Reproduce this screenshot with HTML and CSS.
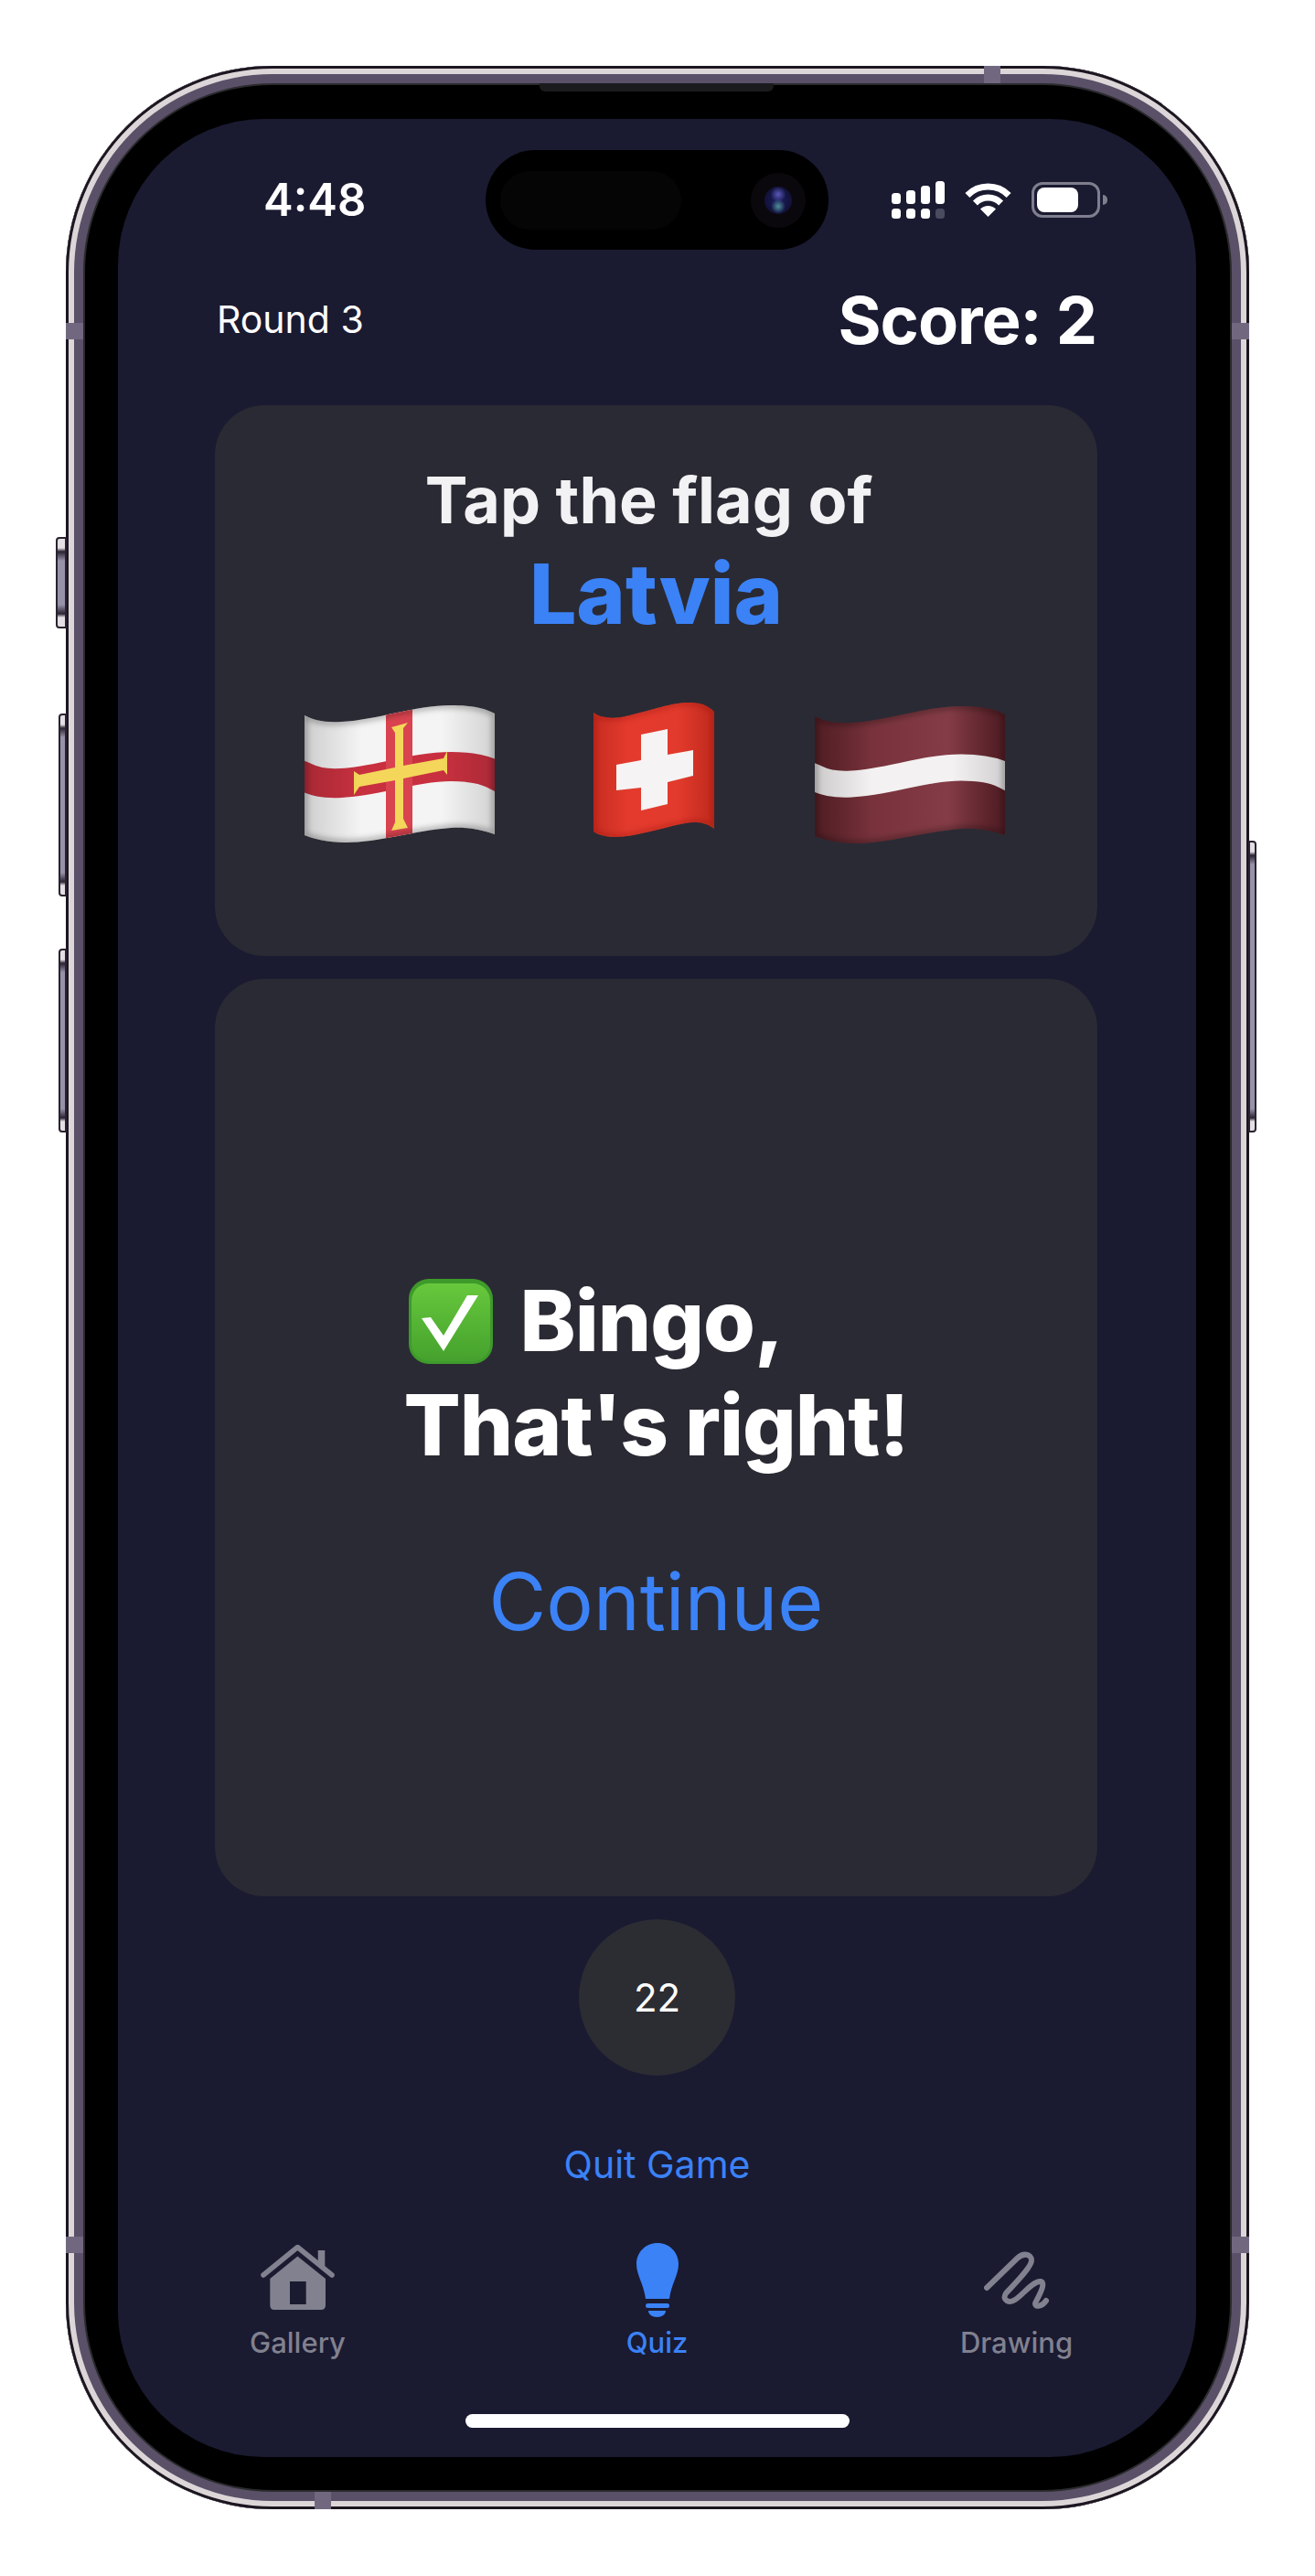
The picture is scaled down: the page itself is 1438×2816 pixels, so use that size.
FILE: index.html
```html
<!DOCTYPE html>
<html lang="en">
<head>
<meta charset="utf-8">
<title>Flag Quiz</title>
<link rel="stylesheet" href="styles.css">
</head>
<body>
<div class="phone">
  <span class="btn btn-mute"></span>
  <span class="btn btn-vol-up"></span>
  <span class="btn btn-vol-down"></span>
  <span class="btn btn-power"></span>
  <span class="band band-top"></span>
  <span class="band band-bottom"></span>
  <span class="band band-l1"></span>
  <span class="band band-l2"></span>
  <span class="band band-r1"></span>
  <span class="band band-r2"></span>
  <span class="speaker"></span>

  <main class="screen">
    <div class="status">
      <div class="time">4:48</div>
      <div class="island">
        <span class="island-sensor"></span>
        <span class="island-lens"><span class="lens-core"></span></span>
      </div>
      <div class="status-icons">
        <svg class="ic-signal" width="58" height="41" viewBox="0 0 58 41">
          <g fill="#fff">
            <rect x="0" y="13" width="10" height="12" rx="3.5"/>
            <rect x="16" y="10" width="10" height="15" rx="3.5"/>
            <rect x="32" y="5" width="10" height="20" rx="3.5"/>
            <rect x="48" y="0" width="10" height="25" rx="3.5"/>
            <rect x="0" y="30" width="10" height="11" rx="3.5"/>
            <rect x="16" y="30" width="10" height="11" rx="3.5"/>
            <rect x="32" y="30" width="10" height="11" rx="3.5"/>
          </g>
          <rect x="48" y="30" width="10" height="11" rx="3.5" fill="#4b4b60"/>
        </svg>
        <svg class="ic-wifi" width="51" height="37" viewBox="0 0 51 37">
          <path d="M2.9 13.4A32 32 0 0 1 48.1 13.4" fill="none" stroke="#fff" stroke-width="7"/>
          <path d="M11.4 21.9A20 20 0 0 1 39.6 21.9" fill="none" stroke="#fff" stroke-width="7"/>
          <path d="M17 28.5A12 12 0 0 1 34 28.5L25.5 37Z" fill="#fff"/>
        </svg>
        <div class="battery">
          <span class="battery-fill"></span>
          <span class="battery-nub"></span>
        </div>
      </div>
    </div>

    <header class="score-row">
      <span class="round">Round 3</span>
      <span class="score">Score: 2</span>
    </header>

    <section class="card card-question">
      <h1 class="prompt">Tap the flag of</h1>
      <h2 class="country">Latvia</h2>
      <div class="flags">
        <svg class="flag flag-gg" width="208" height="150" viewBox="0 0 208 150" role="img" aria-label="Flag of Guernsey">
          <defs>
            <clipPath id="clipGG"><path d="M0 11C10 16 20 19 40 18C80 16 120 0 160 0C180 0 195 2 208 9L208 141C190 135 175 133 160 134C120 137 80 150 45 150C25 150 10 146 0 142Z"/></clipPath>
            <linearGradient id="shadeLight" x1="0" x2="1" y1="0" y2="0">
              <stop offset="0" stop-color="#000" stop-opacity=".16"/>
              <stop offset=".3" stop-color="#000" stop-opacity="0"/>
              <stop offset=".72" stop-color="#000" stop-opacity="0"/>
              <stop offset="1" stop-color="#000" stop-opacity=".14"/>
            </linearGradient>
            <filter id="soft" x="-10%" y="-10%" width="120%" height="120%"><feGaussianBlur stdDeviation="3"/></filter>
          </defs>
          <g clip-path="url(#clipGG)">
            <rect width="208" height="150" fill="#f4f4f4"/>
            <path d="M-12 6L0 11C10 16 20 19 40 18C80 16 120 0 160 0C180 0 195 2 208 9L220 15" transform="translate(0 67)" fill="none" stroke="#c8303f" stroke-width="32"/>
            <rect x="89" width="29" height="150" fill="#d9434f"/>
            <path d="M95 24L113 19L108 25L108 66L152 58L156 50L156 76L152 71L108 80L108 124L113 134L95 137L99 128L99 82L60 89L54 98L54 72L60 76L99 68L99 30Z" fill="#f4d75a"/>
            <rect width="208" height="150" fill="url(#shadeLight)"/>
            <path d="M0 11C10 16 20 19 40 18C80 16 120 0 160 0C180 0 195 2 208 9L208 141C190 135 175 133 160 134C120 137 80 150 45 150C25 150 10 146 0 142Z" fill="none" stroke="#000" stroke-opacity=".3" stroke-width="6" filter="url(#soft)"/>
          </g>
        </svg>
        <svg class="flag flag-ch" width="132" height="148" viewBox="0 0 132 148" role="img" aria-label="Flag of Switzerland">
          <defs>
            <clipPath id="clipCH"><path d="M0 11C8 17 22 18 35 15C65 8 85 0 105 0C118 0 126 4 132 10L132 138C122 130 110 130 100 132C70 138 45 147 25 147C15 147 5 145 0 141Z"/></clipPath>
            <linearGradient id="shadeCH" x1="0" x2="1" y1="0" y2="0">
              <stop offset="0" stop-color="#c72c20"/>
              <stop offset=".28" stop-color="#e33a2d"/>
              <stop offset=".7" stop-color="#e23a2c"/>
              <stop offset="1" stop-color="#bf2a1c"/>
            </linearGradient>
          </defs>
          <g clip-path="url(#clipCH)">
            <rect width="132" height="148" fill="url(#shadeCH)"/>
            <path d="M52 35L81 29L81 57L109 52L109 80L81 87L81 111L52 118L52 93L25 96L25 68L52 63Z" fill="#f5f3f3"/>
            <path d="M0 11C8 17 22 18 35 15C65 8 85 0 105 0C118 0 126 4 132 10L132 138C122 130 110 130 100 132C70 138 45 147 25 147C15 147 5 145 0 141Z" fill="none" stroke="#7d140b" stroke-opacity=".35" stroke-width="5" filter="url(#soft)"/>
          </g>
        </svg>
        <svg class="flag flag-lv" width="208" height="150" viewBox="0 0 208 150" role="img" aria-label="Flag of Latvia">
          <defs>
            <clipPath id="clipLV"><path d="M0 11C10 16 20 19 40 18C80 16 120 0 160 0C180 0 195 2 208 9L208 141C190 135 175 133 160 134C120 137 80 150 45 150C25 150 10 146 0 142Z"/></clipPath>
            <linearGradient id="shadeLV" x1="0" x2="1" y1="0" y2="0">
              <stop offset="0" stop-color="#5e222a"/>
              <stop offset=".3" stop-color="#78323b"/>
              <stop offset=".7" stop-color="#843c46"/>
              <stop offset="1" stop-color="#5a1f27"/>
            </linearGradient>
          </defs>
          <g clip-path="url(#clipLV)">
            <rect width="208" height="150" fill="url(#shadeLV)"/>
            <path d="M-12 6L0 11C10 16 20 19 40 18C80 16 120 0 160 0C180 0 195 2 208 9L220 15" transform="translate(0 67)" fill="none" stroke="#f3f1f1" stroke-width="29"/>
            <rect width="208" height="150" fill="url(#shadeLight)"/>
            <path d="M0 11C10 16 20 19 40 18C80 16 120 0 160 0C180 0 195 2 208 9L208 141C190 135 175 133 160 134C120 137 80 150 45 150C25 150 10 146 0 142Z" fill="none" stroke="#000" stroke-opacity=".3" stroke-width="6" filter="url(#soft)"/>
          </g>
        </svg>
      </div>
    </section>

    <section class="card card-result">
      <div class="result-text">
        <div class="result-line">
          <svg class="check" width="92" height="93" viewBox="0 0 92 93" role="img" aria-label="Check mark">
            <defs>
              <linearGradient id="checkFill" x1="0" x2="0" y1="0" y2="1">
                <stop offset="0" stop-color="#67c83c"/>
                <stop offset="1" stop-color="#45a12d"/>
              </linearGradient>
            </defs>
            <rect width="92" height="93" rx="22" fill="#3e9a2b"/>
            <rect x="3" y="5" width="86" height="85" rx="19" fill="url(#checkFill)"/>
            <path d="M14 43L24 42L38 62L64 18L76 18L38 79Z" fill="#fff"/>
          </svg>
          <span>Bingo,</span>
        </div>
        <div class="result-line">That's right!</div>
      </div>
      <div class="continue">Continue</div>
    </section>

    <div class="timer">22</div>
    <div class="quit">Quit Game</div>

    <nav class="tabs">
      <div class="tab">
        <div class="tab-icon">
          <svg class="home-icon" width="81" height="72" viewBox="0 0 81 72">
            <path fill="#81818f" d="M62.7 7H70.3V25H62.7Z"/>
            <path fill="none" stroke="#81818f" stroke-width="5.5" stroke-linecap="round" stroke-linejoin="round" d="M3 34L40.4 3.5L78 34"/>
            <path fill="#81818f" fill-rule="evenodd" d="M40.4 13.5L71 38V67Q71 72 66 72H15Q10.300 72 10.300 67V38ZM32 41V66H49.700V41Z"/>
          </svg>
        </div>
        <span class="tab-label">Gallery</span>
      </div>
      <div class="tab tab-active">
        <div class="tab-icon">
          <svg width="46" height="81" viewBox="15 7 46 81">
            <path fill="#3b82f6" d="M38 7C51 7 61 17 61 30C61 42 53 52 51 68L25 68C23 52 15 42 15 30C15 17 25 7 38 7Z"/>
            <rect x="25" y="73" width="26" height="5" rx="2.500" fill="#3b82f6"/>
            <path fill="#3b82f6" d="M28 81L47 81C47 85 43 88 37.500 88C32 88 28 85 28 81Z"/>
          </svg>
        </div>
        <span class="tab-label">Quiz</span>
      </div>
      <div class="tab">
        <div class="tab-icon">
          <svg width="72" height="66" viewBox="14 14 72 66">
            <path fill="none" stroke="#81818f" stroke-width="6" stroke-linecap="round" stroke-linejoin="round" d="M17 56L50 24C57 17 66 19 66 26C66 34 44 55 38 62C33 70 42 73 48 69C56 64 68 48 76 49C83 51 72 68 70 73C70 78 78 76 82 70"/>
          </svg>
        </div>
        <span class="tab-label">Drawing</span>
      </div>
    </nav>

    <div class="home-bar"></div>
  </main>
</div>
</body>
</html>
```

FILE: styles.css
```css
* { box-sizing: border-box; }

html, body {
  margin: 0;
  padding: 0;
  background: #fff;
}

body {
  width: 1438px;
  height: 2816px;
  overflow: hidden;
  padding: 72px 0 0 72px;
  font-family: Inter, "Liberation Sans", sans-serif;
}

/* Device frame */
.phone {
  position: relative;
  width: 1294px;
  height: 2671px;
  padding: 58px 0 0 57px;
  border-radius: 226px;
  background: #000;
  box-shadow:
    inset 0 0 0 3px #1c1620,
    inset 0 0 0 9px #ddd6d8,
    inset 0 0 0 19px #5a5068,
    inset 0 0 0 21px #2b2b2e;
}

.btn {
  position: absolute;
  border: 2px solid #2a2230;
  background: linear-gradient(180deg, #e4dfe4 0, #e4dfe4 10px, #2a2230 14px, #9792a8 24px, #9792a8 calc(100% - 24px), #2a2230 calc(100% - 14px), #e4dfe4 calc(100% - 10px), #e4dfe4 100%);
}
.btn-mute { left: -11px; top: 515px; width: 12px; height: 100px; border-radius: 4px 0 0 4px; }
.btn-vol-up { left: -8px; top: 708px; width: 9px; height: 200px; border-radius: 4px 0 0 4px; }
.btn-vol-down { left: -8px; top: 965px; width: 9px; height: 201px; border-radius: 4px 0 0 4px; }
.btn-power { right: -8px; top: 847px; width: 9px; height: 319px; border-radius: 0 4px 4px 0; }

.band {
  position: absolute;
  background: #716880;
}
.band-top { left: 1004px; top: 0; width: 18px; height: 19px; }
.band-bottom { left: 272px; bottom: 0; width: 18px; height: 19px; }
.band-l1 { left: 0; top: 281px; width: 19px; height: 18px; }
.band-l2 { left: 0; top: 2373px; width: 19px; height: 18px; }
.band-r1 { right: 0; top: 281px; width: 19px; height: 18px; }
.band-r2 { right: 0; top: 2373px; width: 19px; height: 18px; }

.speaker {
  position: absolute;
  left: 518px;
  top: 19px;
  width: 256px;
  height: 9px;
  border-radius: 0 0 6px 6px;
  background: #1b1b1d;
}

/* Screen */
.screen {
  width: 1179px;
  height: 2556px;
  border-radius: 160px;
  background: #1a1a31;
  color: #fff;
  overflow: hidden;
  display: flex;
  flex-direction: column;
}

.status {
  display: grid;
  grid-template-columns: 402px 375px 1fr;
  align-items: center;
  margin-top: 34px;
  height: 109px;
}
.time {
  padding-left: 159px;
  font-size: 49px;
  font-weight: 600;
  line-height: 1;
}
.island {
  position: relative;
  height: 109px;
  border-radius: 55px;
  background: #000;
}
.island-sensor {
  position: absolute;
  left: 16px;
  top: 23px;
  width: 198px;
  height: 64px;
  border-radius: 32px;
  background: #050505;
}
.island-lens {
  position: absolute;
  left: 290px;
  top: 25px;
  width: 60px;
  height: 60px;
  border-radius: 50%;
  background: #0b080d;
  display: flex;
  align-items: center;
  justify-content: center;
}
.lens-core {
  width: 30px;
  height: 30px;
  border-radius: 50%;
  background:
    radial-gradient(circle at 50% 72%, #4f8f9a 0, rgba(79,143,154,0) 30%),
    radial-gradient(circle at 50% 28%, #5a58b8 0, rgba(90,88,184,0) 32%),
    radial-gradient(circle at 50% 50%, #1d1f5e 0, #12123c 65%, #1a1a26 100%);
}
.status-icons {
  display: flex;
  align-items: center;
  justify-content: flex-end;
  padding-right: 105px;
}
.ic-signal { margin-right: 22px; }
.ic-wifi { margin-right: 22px; }
.battery {
  position: relative;
  width: 75px;
  height: 39px;
  border: 3px solid #7e7e8e;
  border-radius: 12px;
}
.battery-fill {
  position: absolute;
  left: 3px;
  top: 3px;
  width: 45px;
  height: 27px;
  border-radius: 8px;
  background: #fff;
}
.battery-nub {
  position: absolute;
  right: -11px;
  top: 11px;
  width: 5px;
  height: 11px;
  border-radius: 0 5px 5px 0;
  background: #7e7e8e;
}

.score-row {
  display: flex;
  align-items: center;
  justify-content: space-between;
  height: 92px;
  margin: 30px 109px 48px 108px;
}
.round { font-size: 41px; font-weight: 400; }
.score { font-size: 72px; font-weight: 700; letter-spacing: -1px; }

.card {
  margin: 0 108px 0 106px;
  background: #2a2a34;
  border-radius: 54px;
  flex: none;
}

.card-question {
  height: 602px;
  padding-top: 64px;
  display: flex;
  flex-direction: column;
  align-items: center;
}
.prompt {
  margin: 0;
  padding-right: 16px;
  font-size: 70px;
  font-weight: 700;
  line-height: 80px;
  color: #f2f2f4;
}
.country {
  margin: 7px 0 0;
  font-size: 91px;
  font-weight: 800;
  line-height: 110px;
  color: #3b82f6;
}
.flags {
  align-self: stretch;
  margin-top: 64px;
  padding-left: 98px;
  display: flex;
  align-items: flex-start;
}
.flag-gg { margin-top: 3px; }
.flag-ch { margin-left: 108px; }
.flag-lv { margin-left: 110px; margin-top: 4px; }

.card-result {
  margin-top: 25px;
  height: 1003px;
  display: flex;
  flex-direction: column;
  align-items: center;
  padding-top: 317px;
}
.result-text {
  font-size: 92px;
  font-weight: 800;
  line-height: 114px;
  letter-spacing: -1px;
}
.result-line {
  display: flex;
  align-items: center;
  height: 114px;
}
.check { margin: 0 30px 0 5px; flex: none; }
.continue {
  margin-top: 81px;
  font-size: 86px;
  line-height: 110px;
  font-weight: 400;
  color: #3b82f6;
}

.timer {
  align-self: center;
  margin-top: 25px;
  width: 171px;
  height: 171px;
  border-radius: 50%;
  background: #2c2c33;
  display: flex;
  align-items: center;
  justify-content: center;
  font-size: 42px;
}
.quit {
  align-self: center;
  margin-top: 72px;
  font-size: 41px;
  line-height: 50px;
  color: #3b82f6;
}

.tabs {
  display: grid;
  grid-template-columns: repeat(3, 393px);
  margin-top: 60px;
}
.tab {
  display: flex;
  flex-direction: column;
  align-items: center;
  color: #81818f;
}
.tab-active { color: #3b82f6; }
.tab-icon {
  height: 82px;
  display: flex;
  align-items: center;
  justify-content: center;
}
.home-icon { margin-bottom: 6px; }
.tab-label {
  margin-top: 10px;
  font-size: 31px;
  font-weight: 500;
  line-height: 36px;
}

.home-bar {
  align-self: center;
  width: 420px;
  height: 15px;
  margin-top: 60px;
  border-radius: 8px;
  background: #fff;
}
```
